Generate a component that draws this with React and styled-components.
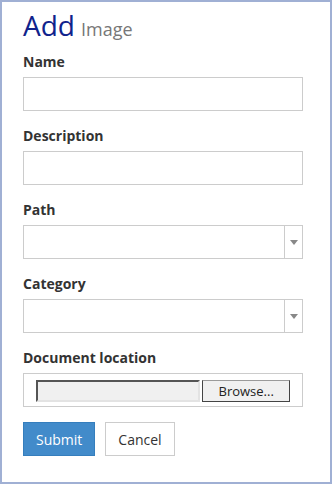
import React from "react";
import styled, { createGlobalStyle } from "styled-components";

const Global = createGlobalStyle`
  html, body { margin: 0; padding: 0; background: #fff; }
  body { font-family: "Open Sans", "Liberation Sans", sans-serif; }
  * { box-sizing: border-box; }
`;

const Frame = styled.div`
  width: 332px;
  height: 484px;
  border: 2px solid #a0b0d4;
  padding: 8px 28px 0 21px;
  display: flex;
  flex-direction: column;
  background: #fff;
`;

const Heading = styled.h1`
  margin: 0 0 7px 0;
  font-weight: 400;
  font-size: 28px;
  line-height: 31px;
  color: #10238c;
  display: flex;
  align-items: baseline;
  gap: 6px;
`;

const Sub = styled.small`
  font-size: 18px;
  color: #777;
`;

const Field = styled.div`
  display: flex;
  flex-direction: column;
  gap: 5px;
  margin-bottom: 15px;
  &:last-of-type { margin-bottom: 21px; }
`;

const Label = styled.label`
  font-size: 14px;
  font-weight: 700;
  line-height: 20px;
  color: #333;
`;

const TextInput = styled.input`
  width: 280px;
  height: 34px;
  border: 1px solid #ccc;
  background: #fff;
  margin: 0;
  padding: 6px 12px;
  font: inherit;
  outline: none;
`;

const SelectBox = styled.div`
  width: 280px;
  height: 34px;
  border: 1px solid #ccc;
  display: flex;
  background: #fff;
`;

const SelectValue = styled.div`
  flex: 1;
`;

const SelectArrow = styled.div`
  width: 18px;
  border-left: 1px solid #ccc;
  display: flex;
  align-items: center;
  justify-content: center;
  &::after {
    content: "";
    width: 0;
    height: 0;
    border-left: 4px solid transparent;
    border-right: 4px solid transparent;
    border-top: 5px solid #888;
  }
`;

const FileBox = styled.div`
  width: 280px;
  height: 34px;
  border: 1px solid #ccc;
  padding: 6px 12px;
  display: flex;
  gap: 2px;
  align-items: flex-start;
`;

const FileText = styled.div`
  width: 165px;
  height: 22px;
  background: #f0f0f0;
  border-top: 2px solid #555;
  border-left: 2px solid #555;
  border-right: 2px solid #e3e3e3;
  border-bottom: 2px solid #e3e3e3;
`;

const BrowseButton = styled.button`
  width: 88px;
  height: 22px;
  margin: 0;
  padding: 0;
  background: #f0f0f0;
  border: 1px solid #444;
  border-top-color: #9a9a9a;
  font-family: "Open Sans", "Liberation Sans", sans-serif;
  font-size: 13px;
  color: #222;
  line-height: 18px;
`;

const Actions = styled.div`
  display: flex;
  gap: 10px;
`;

const Button = styled.button`
  height: 34px;
  padding: 0 12px;
  margin: 0;
  font-family: "Open Sans", "Liberation Sans", sans-serif;
  font-size: 14px;
  border: 1px solid ${(p) => (p.$primary ? "#357ebd" : "#ccc")};
  background: ${(p) => (p.$primary ? "#428bca" : "#fff")};
  color: ${(p) => (p.$primary ? "#fff" : "#333")};
`;

export default function App() {
  return (
    <>
      <Global />
      <Frame>
        <Heading>
          Add <Sub>Image</Sub>
        </Heading>
        <Field>
          <Label>Name</Label>
          <TextInput type="text" />
        </Field>
        <Field>
          <Label>Description</Label>
          <TextInput type="text" />
        </Field>
        <Field>
          <Label>Path</Label>
          <SelectBox>
            <SelectValue />
            <SelectArrow />
          </SelectBox>
        </Field>
        <Field>
          <Label>Category</Label>
          <SelectBox>
            <SelectValue />
            <SelectArrow />
          </SelectBox>
        </Field>
        <Field>
          <Label>Document location</Label>
          <FileBox>
            <FileText />
            <BrowseButton type="button">Browse...</BrowseButton>
          </FileBox>
        </Field>
        <Actions>
          <Button $primary type="button">Submit</Button>
          <Button type="button">Cancel</Button>
        </Actions>
      </Frame>
    </>
  );
}
